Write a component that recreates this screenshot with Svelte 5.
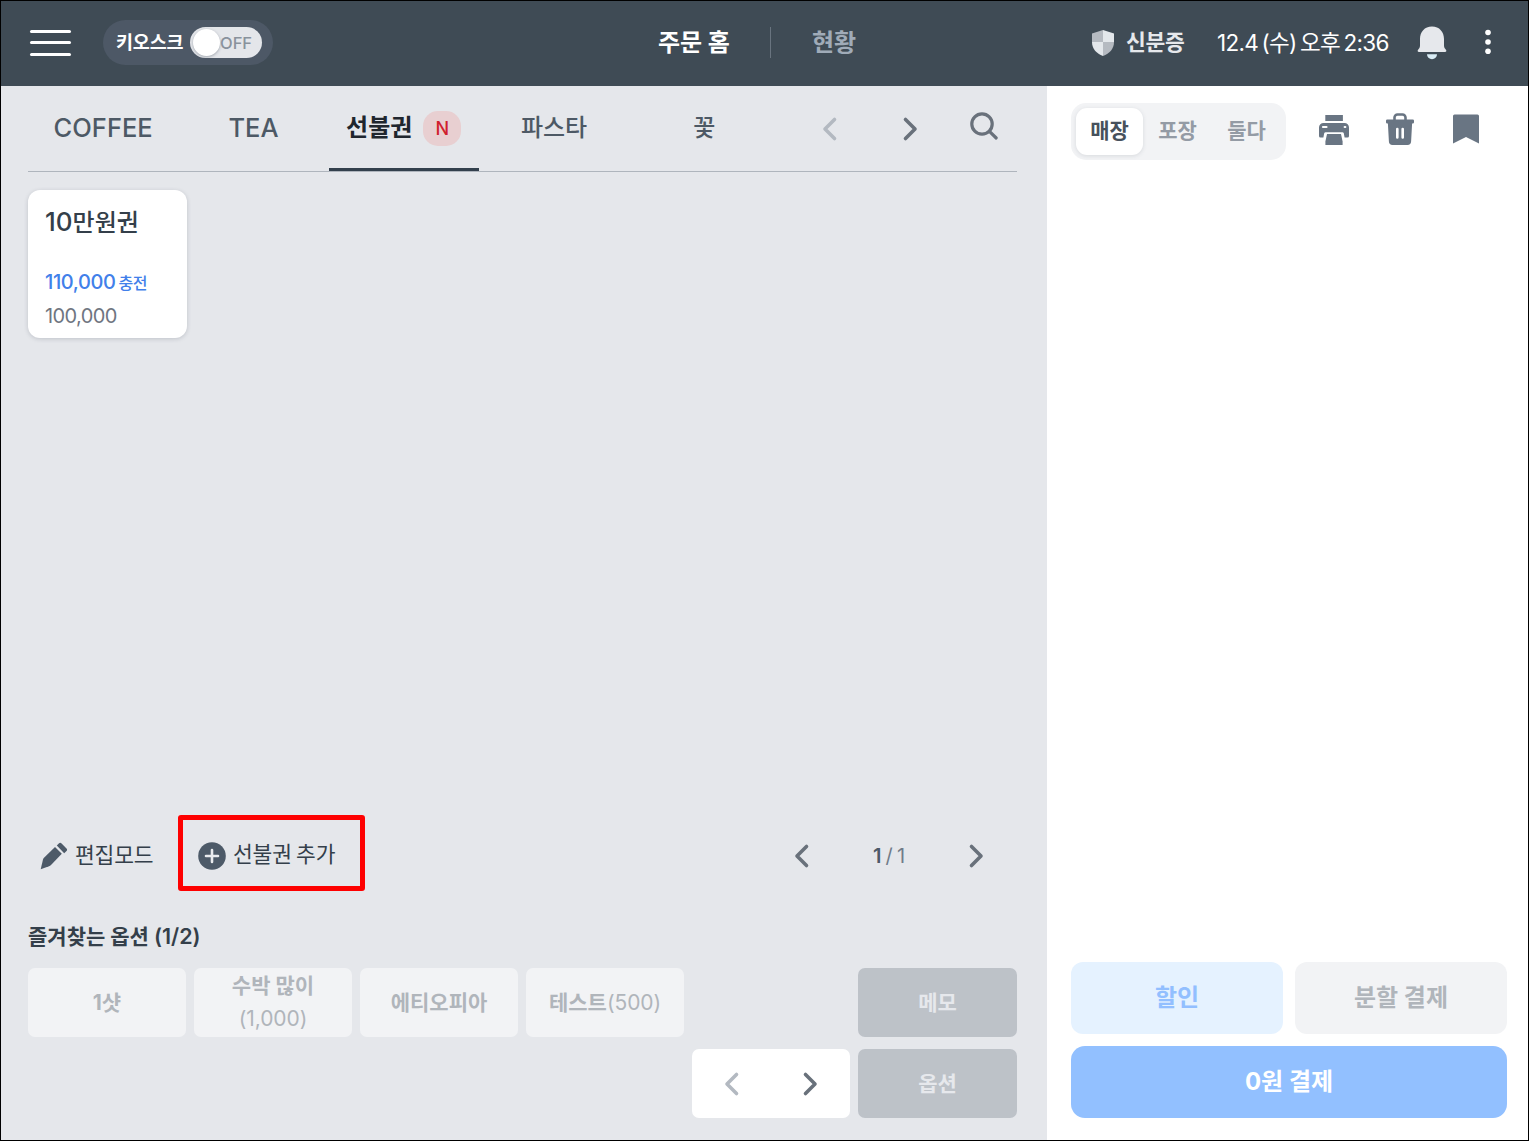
<script lang="ts">
    interface Tab {
        id: string;
        label: string;
        isNew?: boolean;
    }

    interface Option {
        name: string;
        price?: string;
        stacked?: boolean;
    }

    const tabs: Tab[] = [
        { id: "coffee", label: "COFFEE" },
        { id: "tea", label: "TEA" },
        { id: "prepaid", label: "선불권", isNew: true },
        { id: "pasta", label: "파스타" },
        { id: "flower", label: "꽃" },
    ];

    const options: Option[] = [
        { name: "1샷" },
        { name: "수박 많이", price: "(1,000)", stacked: true },
        { name: "에티오피아" },
        { name: "테스트", price: "(500)" },
    ];

    const orderTypes = ["매장", "포장", "둘다"];

    let activeTab = $state("prepaid");
    let orderType = $state("매장");
    let kioskOn = $state(false);
</script>

{#snippet chevron(direction: "left" | "right", muted = false)}
    <svg class="chevron" class:muted width="18" height="26" viewBox="0 0 18 26">
        <path
            d={direction === "left" ? "M13.5 3.500 4 13l9.500 9.500" : "M4.500 3.500 14 13l-9.500 9.500"}
            fill="none"
            stroke="currentColor"
            stroke-width="3.600"
            stroke-linecap="round"
            stroke-linejoin="round"
        />
    </svg>
{/snippet}

<div class="pos">
    <header class="topbar">
        <div class="topbar-left">
            <button class="menu" aria-label="메뉴">
                <span></span>
                <span></span>
                <span></span>
            </button>
            <button class="kiosk" onclick={() => (kioskOn = !kioskOn)}>
                <span class="kiosk-label">키오스크</span>
                <span class="switch">
                    <span class="knob"></span>
                    <span class="switch-text">{kioskOn ? "ON" : "OFF"}</span>
                </span>
            </button>
        </div>
        <nav class="topbar-nav">
            <span class="nav-item current">주문 홈</span>
            <span class="nav-divider"></span>
            <span class="nav-item">현황</span>
        </nav>
        <div class="topbar-right">
            <svg class="shield" width="24" height="28" viewBox="0 0 24 28">
                <path d="M12 1 1 4.500V13h11z" fill="#b5bac1" />
                <path d="M12 1l11 3.500V13H12z" fill="#e3e7eb" />
                <path d="M1 13h11v14C5.500 24.500 1 20 1 13z" fill="#e3e7eb" />
                <path d="M23 13H12v14c6.500-2.500 11-7 11-14z" fill="#b5bac1" />
            </svg>
            <span class="id-label">신분증</span>
            <span class="clock">12.4 (수) 오후 2:36</span>
            <svg class="bell" width="30" height="34" viewBox="0 0 30 34">
                <path
                    d="M15 .5C7.500.5 3 6 3 13v6.500c0 2-.8 3-1.900 4.200C.2 24.800.6 26 2 26h26c1.400 0 1.800-1.200.9-2.300C27.800 22.500 27 21.500 27 19.500V13C27 6 22.500.5 15 .5z"
                    fill="#e6e8ec"
                />
                <path d="M10 28.300h10a5 5 0 0 1-10 0z" fill="#d9ecf5" />
            </svg>
            <svg class="more" width="6" height="26" viewBox="0 0 6 26">
                <circle cx="3" cy="3.500" r="2.800" fill="#fff" />
                <circle cx="3" cy="13" r="2.800" fill="#fff" />
                <circle cx="3" cy="22.300" r="2.800" fill="#fff" />
            </svg>
        </div>
    </header>

    <div class="body">
        <main class="catalog">
            <div class="tabs">
                {#each tabs as tab (tab.id)}
                    <button
                        class="tab"
                        class:active={tab.id === activeTab}
                        onclick={() => (activeTab = tab.id)}
                    >
                        <span class="tab-label">{tab.label}</span>
                        {#if tab.isNew}
                            <span class="badge">N</span>
                        {/if}
                    </button>
                {/each}
                <div class="tab-tools">
                    {@render chevron("left", true)}
                    {@render chevron("right")}
                    <svg class="search" width="30" height="30" viewBox="0 0 30 30">
                        <g fill="none" stroke="#69717b" stroke-linecap="round">
                            <circle cx="13" cy="13" r="10.200" stroke-width="3.200" />
                            <path d="M20.700 20.700l6.500 6.300" stroke-width="3.200" />
                        </g>
                    </svg>
                </div>
            </div>

            <div class="products">
                <button class="product">
                    <span class="product-name"><span class="amount">10</span>만원권</span>
                    <span class="product-charge">110,000 <small>충전</small></span>
                    <span class="product-price">100,000</span>
                </button>
            </div>

            <div class="tools">
                <button class="tool">
                    <svg width="28" height="28" viewBox="0 0 28 28" fill="#4d5a68">
                        <path d="M.7 27.200l2.300-9.700c.2-.8.500-1.300 1-1.800L15 5.100l6.800 6.700L11 23c-.6.600-1.200 1-2 1.300z" />
                        <path d="M16.800 3.500l2-2c.9-.9 1.900-.9 2.800 0l4.900 4.900c.8.8.8 1.700 0 2.500l-2.300 2.300z" />
                    </svg>
                    <span>편집모드</span>
                </button>
                <button class="tool marked">
                    <svg width="28" height="28" viewBox="0 0 28 28">
                        <circle cx="14" cy="14" r="13.800" fill="#4d5a68" />
                        <path
                            d="M14 8v12M8 14h12"
                            stroke="#e9ebee"
                            stroke-width="2.600"
                            stroke-linecap="round"
                        />
                    </svg>
                    <span>선불권 추가</span>
                </button>
                <div class="pager">
                    {@render chevron("left")}
                    <span class="pages"><b>1</b> / 1</span>
                    {@render chevron("right")}
                </div>
            </div>

            <h2 class="options-title">즐겨찾는 옵션 <span>(1/2)</span></h2>
            <div class="options">
                {#each options as option}
                    <button class="option" class:stacked={option.stacked}>
                        <span class="option-name">{option.name}</span>
                        {#if option.price}
                            <span class="option-price">{option.price}</span>
                        {/if}
                    </button>
                {/each}
                <button class="option action memo">메모</button>
                <div class="option-pager">
                    {@render chevron("left", true)}
                    {@render chevron("right")}
                </div>
                <button class="option action">옵션</button>
            </div>
        </main>

        <aside class="order">
            <div class="order-top">
                <div class="segment">
                    {#each orderTypes as type}
                        <button
                            class="segment-item"
                            class:selected={type === orderType}
                            onclick={() => (orderType = type)}>{type}</button
                        >
                    {/each}
                </div>
                <div class="order-icons">
                    <svg width="30" height="32" viewBox="0 0 30 32" fill="#697583">
                        <path d="M6.300 1h17.600v6H6.300z" />
                        <path
                            d="M4.500 9h21A4.500 4.500 0 0 1 30 13.500V22a1.500 1.500 0 0 1-1.500 1.500h-2.900l-.8-4.300a1.500 1.500 0 0 0-1.400-1H6.600a1.500 1.500 0 0 0-1.400 1l-.8 4.300H1.500A1.500 1.500 0 0 1 0 22v-8.500A4.500 4.500 0 0 1 4.500 9z"
                        />
                        <path d="M4 13h3.500M25.700 13h.6" stroke="#fff" stroke-width="2.200" stroke-linecap="round" />
                        <path d="M8 20h14l1.600 7.500V31H6.400v-3.500z" />
                    </svg>
                    <svg width="28" height="34" viewBox="0 0 28 34">
                        <path
                            d="M8.500 8V5.500a3 3 0 0 1 3-3h5a3 3 0 0 1 3 3V8"
                            fill="none"
                            stroke="#697583"
                            stroke-width="2.600"
                        />
                        <path
                            d="M1.200 7.500h25.600A1.200 1.200 0 0 1 28 8.700v1.600a1.300 1.300 0 0 1-1.300 1.300h-.6l-1 18a3.600 3.600 0 0 1-3.600 3.400H6.500a3.600 3.600 0 0 1-3.600-3.400l-1-18h-.6A1.300 1.300 0 0 1 0 10.300V8.700a1.200 1.200 0 0 1 1.200-1.200z"
                            fill="#697583"
                        />
                        <path d="M11.300 17v8.500M16.700 17v8.500" stroke="#fff" stroke-width="2.600" stroke-linecap="round" />
                    </svg>
                    <svg width="26" height="30" viewBox="0 0 26 30">
                        <path d="M1.500.5h23a1.500 1.500 0 0 1 1.500 1.500v27.500L13 23 0 29.500V2A1.500 1.500 0 0 1 1.500.5z" fill="#697583" />
                    </svg>
                </div>
            </div>

            <div class="checkout">
                <button class="pay-btn discount">할인</button>
                <button class="pay-btn split">분할 결제</button>
                <button class="pay-btn pay">0원 결제</button>
            </div>
        </aside>
    </div>
</div>

<style>
    :global(body) {
        margin: 0;
    }

    .pos {
        box-sizing: border-box;
        width: 1529px;
        height: 1141px;
        display: flex;
        flex-direction: column;
        border: 1px solid #000;
        background: #fff;
        font-family: Inter, "Noto Sans CJK KR", sans-serif;
        color: #343f4a;
        overflow: hidden;
        white-space: nowrap;
    }

    button {
        margin: 0;
        padding: 0;
        border: 0;
        background: none;
        font: inherit;
        color: inherit;
        white-space: nowrap;
    }

    svg {
        display: block;
        flex-shrink: 0;
    }

    .topbar {
        display: flex;
        align-items: center;
        box-sizing: border-box;
        height: 85px;
        padding-bottom: 2px;
        flex-shrink: 0;
        background: #3f4b55;
        color: #fff;
        line-height: 34px;
    }

    .topbar-left {
        display: flex;
        align-items: center;
        gap: 32px;
        width: 628px;
        padding-left: 29px;
    }

    .menu {
        display: flex;
        flex-direction: column;
        gap: 8.500px;
        width: 41px;
    }

    .menu span {
        height: 3px;
        border-radius: 2px;
        background: #fff;
    }

    .kiosk {
        display: flex;
        align-items: center;
        width: 170px;
        height: 45px;
        border-radius: 23px;
        background: #4d5866;
        box-sizing: border-box;
        padding-left: 13px;
    }

    .kiosk-label {
        width: 74px;
        margin-top: -2px;
        text-align: left;
        font-size: 18.500px;
        font-weight: 700;
        letter-spacing: -0.2px;
    }

    .switch {
        display: flex;
        align-items: center;
        box-sizing: border-box;
        width: 72px;
        height: 31px;
        padding-left: 3px;
        border-radius: 16px;
        background: #e4e6ea;
    }

    .knob {
        width: 27px;
        height: 27px;
        border-radius: 50%;
        background: #fff;
        box-shadow: 0 1px 3px rgba(60, 70, 85, 0.4);
    }

    .switch-text {
        font-size: 16.500px;
        font-weight: 500;
        color: #89929c;
    }

    .topbar-nav {
        display: flex;
        align-items: center;
        font-size: 24px;
        font-weight: 600;
    }

    .nav-item {
        color: #a0abb8;
    }

    .nav-item.current {
        width: 73px;
        font-weight: 700;
        color: #fff;
    }

    .nav-divider {
        width: 1px;
        height: 31px;
        margin: 0 41px 0 39px;
        background: #69747f;
    }

    .topbar-right {
        display: flex;
        align-items: center;
        margin-left: auto;
        padding-right: 37px;
    }

    .id-label {
        width: 91px;
        margin-left: 11px;
        margin-top: -2px;
        font-size: 21.500px;
        font-weight: 600;
        letter-spacing: -0.3px;
        color: #e6e8ec;
    }

    .clock {
        width: 172px;
        font-size: 22.500px;
        letter-spacing: -0.7px;
        word-spacing: -2.200px;
    }

    .bell {
        margin-left: 28px;
    }

    .more {
        margin-left: 38px;
        margin-top: -1px;
    }

    .body {
        display: flex;
        flex: 1;
        min-height: 0;
    }

    .catalog {
        display: flex;
        flex-direction: column;
        box-sizing: border-box;
        width: 1046px;
        padding: 0 30px 22px 27px;
        background: #e5e7eb;
    }

    .chevron {
        color: #69717b;
    }

    .chevron.muted {
        color: #b3b9c1;
    }

    .tabs {
        display: flex;
        height: 85px;
        border-bottom: 1px solid #afb5bd;
    }

    .tab {
        display: flex;
        align-items: center;
        justify-content: center;
        gap: 11px;
        box-sizing: border-box;
        width: 150.300px;
        height: 85px;
        padding-top: 2px;
        border-bottom: 3px solid transparent;
        font-size: 24px;
        font-weight: 500;
        line-height: 36px;
        color: #4d5965;
    }

    .tab:nth-child(-n + 2) {
        font-size: 25.500px;
    }

    .tab.active {
        border-bottom-color: #33404d;
        font-weight: 700;
        color: #20262e;
    }

    .badge {
        width: 38px;
        height: 35px;
        border-radius: 15px;
        background: #e8cfd1;
        font-size: 18px;
        font-weight: 500;
        text-align: center;
        color: #d01f2e;
    }

    .tab-tools {
        display: flex;
        align-items: center;
        margin-left: auto;
        padding-right: 18px;
    }

    .tab-tools .chevron + .chevron {
        margin: 0 50px 0 62px;
    }

    .search {
        margin-top: -5px;
    }

    .products {
        flex: 1;
        padding-top: 18px;
    }

    .product {
        display: flex;
        flex-direction: column;
        align-items: flex-start;
        box-sizing: border-box;
        width: 159px;
        height: 148px;
        padding: 14px 17px 0;
        border-radius: 12px;
        background: #fff;
        box-shadow: 0 1px 4px rgba(60, 70, 85, 0.22);
    }

    .product-name {
        height: 61px;
        font-size: 24px;
        font-weight: 500;
        line-height: 36px;
    }

    .amount {
        font-size: 26px;
    }

    .product-charge {
        height: 34px;
        font-size: 20px;
        font-weight: 500;
        line-height: 34px;
        letter-spacing: -0.4px;
        word-spacing: -2px;
        color: #4180ea;
    }

    .product-charge small {
        font-size: 16px;
    }

    .product-price {
        font-size: 20px;
        line-height: 34px;
        letter-spacing: -0.6px;
        color: #6f7681;
    }

    .tools {
        display: flex;
        align-items: center;
        height: 76px;
        font-size: 21.500px;
        line-height: 32px;
    }

    .tool {
        display: flex;
        align-items: center;
        gap: 7px;
        box-sizing: border-box;
        width: 150px;
        height: 76px;
        padding-left: 12px;
        padding-top: 6px;
    }

    .tool span {
        margin-top: -3px;
        letter-spacing: -0.2px;
        word-spacing: -1.500px;
    }

    .tool.marked {
        width: 187px;
        padding-left: 15px;
        padding-top: 5px;
        border: 5px solid #fe0000;
        border-radius: 3px;
    }

    .pager {
        display: flex;
        align-items: center;
        margin: 5px 32px 0 auto;
    }

    .pages {
        width: 156px;
        font-size: 20px;
        text-align: center;
        word-spacing: -1.500px;
        color: #717c89;
    }

    .pages b {
        font-weight: 600;
        color: #4d5a68;
    }

    .options-title {
        height: 36px;
        margin: 27px 0 14px;
        font-size: 21px;
        font-weight: 700;
        line-height: 36px;
    }

    .options-title span {
        font-size: 21.500px;
        font-weight: 600;
    }

    .options {
        display: grid;
        grid-template-columns: repeat(5, 158px) 1fr;
        grid-template-rows: 69px 69px;
        gap: 12px 8px;
    }

    .option {
        display: flex;
        align-items: center;
        justify-content: center;
        padding-bottom: 1px;
        border-radius: 7px;
        background: #f2f3f5;
        font-size: 21px;
        font-weight: 500;
        line-height: 33px;
        color: #b0b5bb;
    }

    .option.stacked {
        flex-direction: column;
    }

    .option-name {
        font-weight: 700;
    }

    .option-price {
        font-weight: 400;
        letter-spacing: -0.1px;
    }

    .option.action {
        background: #bdc2c8;
        font-weight: 700;
        color: #e6e8ec;
    }

    .option.memo {
        grid-column: 6;
    }

    .option-pager {
        grid-column: 5;
        display: flex;
        align-items: center;
        justify-content: center;
        gap: 60px;
        border-radius: 7px;
        background: #fff;
    }

    .order {
        display: flex;
        flex: 1;
        flex-direction: column;
        justify-content: space-between;
        padding: 17px 21px 22px 24px;
    }

    .order-top {
        display: flex;
        align-items: center;
        justify-content: space-between;
    }

    .segment {
        display: flex;
        box-sizing: border-box;
        width: 215px;
        height: 57px;
        padding: 5px;
        border-radius: 15px;
        background: #f2f3f5;
    }

    .segment-item {
        width: 69px;
        padding-bottom: 2px;
        border-radius: 11px;
        font-size: 21px;
        font-weight: 600;
        line-height: 34px;
        color: #949ba5;
    }

    .segment-item.selected {
        width: 67px;
        background: #fff;
        box-shadow: 0 1px 4px rgba(60, 70, 85, 0.14);
        color: #47515c;
    }

    .order-icons {
        display: flex;
        align-items: center;
        gap: 39px;
        padding-right: 28px;
        margin-top: -6px;
    }

    .order-icons svg:first-child {
        margin: 3px -2px 0 0;
    }

    .order-icons svg:last-child {
        margin-top: 1px;
    }

    .checkout {
        display: grid;
        grid-template-columns: 1fr 1fr;
        grid-auto-rows: 72px;
        gap: 12px;
    }

    .pay-btn {
        border-radius: 12px;
        font-size: 24px;
        font-weight: 700;
        line-height: 36px;
    }

    .discount {
        background: #e5f2ff;
        color: #92bfff;
    }

    .split {
        background: #f2f3f5;
        color: #b0b5bb;
    }

    .pay {
        grid-column: 1 / -1;
        border-radius: 14px;
        background: #92c0ff;
        color: #fff;
    }
</style>
